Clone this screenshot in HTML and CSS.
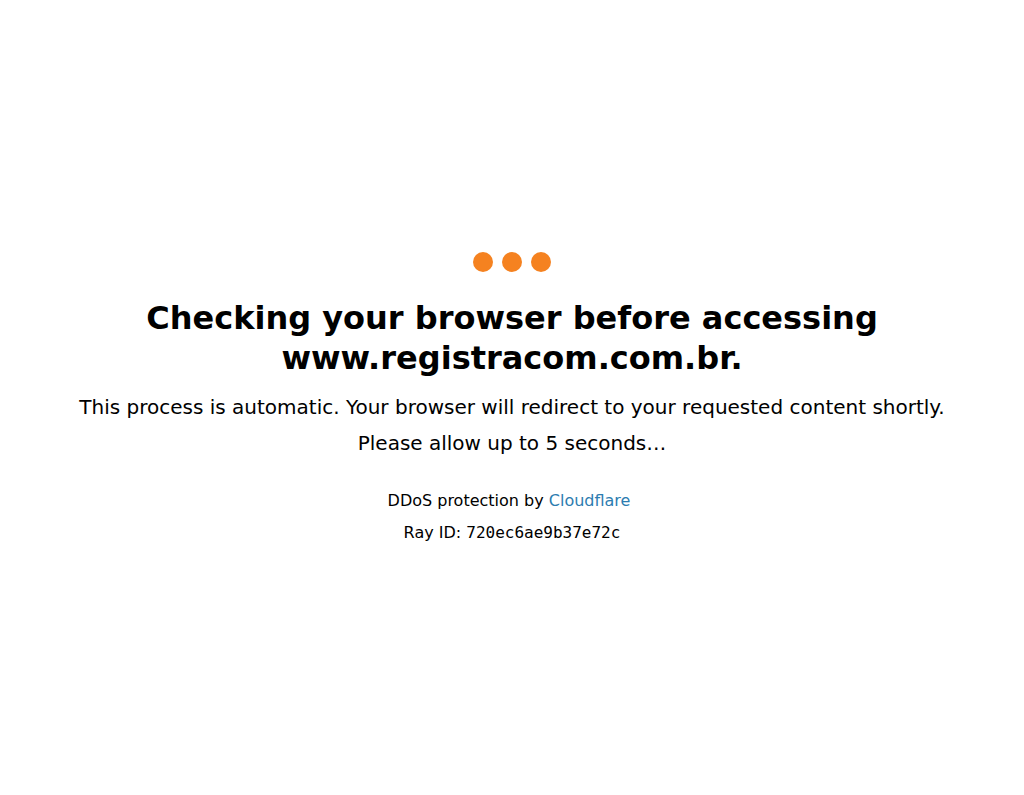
FILE: index.html
```
<!DOCTYPE html>
<html lang="en-US">
<head>
<meta charset="UTF-8">
<title>Just a moment...</title>
<link rel="stylesheet" href="styles.css">
</head>
<body>
<div class="wrapper">
  <div class="content">
    <div class="bubbles-row"><span class="bubble"></span> <span class="bubble"></span> <span class="bubble"></span></div>
    <h1 class="title">Checking your browser before accessing www.registracom.com.br.</h1>
    <p class="msg">This process is automatic. Your browser will redirect to your requested content shortly.</p>
    <p class="msg">Please allow up to 5 seconds&hellip;</p>
    <div class="attribution">
      DDoS protection by <a class="cf-link" href="#">Cloudflare</a>
      <br>
      <span class="ray-id">Ray ID: <code class="ray-code">720ec6ae9b37e72c</code></span>
    </div>
  </div>
</div>
</body>
</html>
```

FILE: styles.css
```
html, body {
  width: 100%;
  height: 100%;
  margin: 0;
  padding: 0;
}
body {
  background: #ffffff;
  color: #000000;
  font-family: "DejaVu Sans", sans-serif;
  font-size: 16px;
  line-height: 1.7em;
}
.wrapper {
  box-sizing: border-box;
  height: 100%;
  padding: 24px 20px 20px;
  display: flex;
  align-items: center;
  justify-content: center;
}
.content {
  text-align: center;
}
.bubbles-row {
  width: 100%;
}
.bubble {
  background-color: #f58220;
  width: 20px;
  height: 20px;
  margin: 2px;
  border-radius: 100%;
  display: inline-block;
}
.title {
  text-align: center;
  font-weight: 700;
  margin: 16px 0;
  font-size: 32px;
  line-height: 1.25;
  color: #000000;
}
.msg {
  font-size: 20px;
  font-weight: 400;
  margin: 8px 0;
  text-align: center;
}
.attribution {
  margin-top: 28px;
  line-height: 32px;
  text-align: center;
}
.cf-link {
  color: #2c7cb0;
  text-decoration: none;
  margin-right: 6px;
}
.ray-code {
  font-family: "DejaVu Sans Mono", monaco, courier, monospace;
  font-size: 16px;
}
```
